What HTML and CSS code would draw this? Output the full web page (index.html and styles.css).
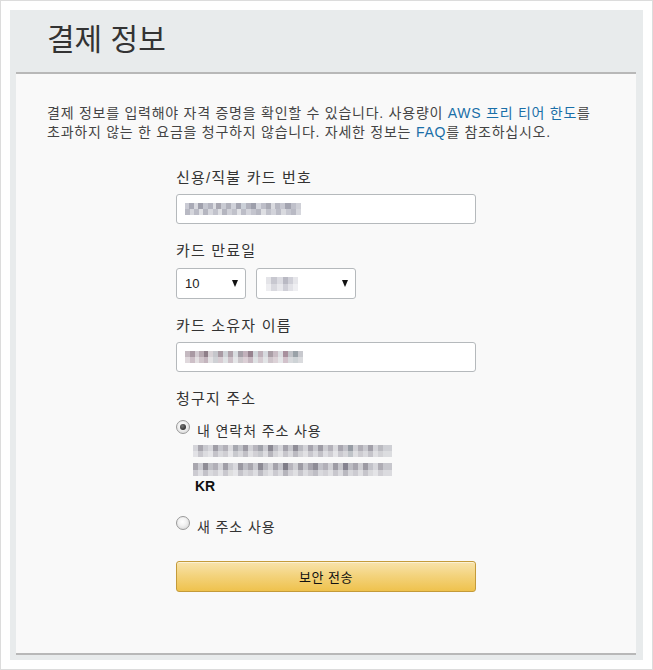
FILE: index.html
```html
<!DOCTYPE html>
<html lang="ko">
<head>
<meta charset="utf-8">
<title>결제 정보</title>
<link rel="stylesheet" href="styles.css">
</head>
<body>
<div class="page">
  <div class="panel">
    <div class="head">
      <h1 class="title">결제 정보</h1>
    </div>
    <div class="box">
      <p class="intro">결제 정보를 입력해야 자격 증명을 확인할 수 있습니다. 사용량이 <a class="link" href="#">AWS 프리 티어 한도</a>를<br>초과하지 않는 한 요금을 청구하지 않습니다. 자세한 정보는 <a class="link" href="#">FAQ</a>를 참조하십시오.</p>
      <div class="form">
        <div class="field">
          <div class="label">신용/직불 카드 번호</div>
          <div class="input"><span class="mosaic m-card"></span></div>
        </div>
        <div class="field">
          <div class="label">카드 만료일</div>
          <div class="selects">
            <div class="select s-month"><span class="sel-val">10</span><span class="arrow"></span></div>
            <div class="select s-year"><span class="mosaic m-year"></span><span class="arrow"></span></div>
          </div>
        </div>
        <div class="field">
          <div class="label">카드 소유자 이름</div>
          <div class="input"><span class="mosaic m-name"></span></div>
        </div>
        <div class="field">
          <div class="label">청구지 주소</div>
          <div class="radio-row first"><span class="radio checked"></span><span class="radio-text">내 연락처 주소 사용</span></div>
          <div class="address">
            <span class="mosaic m-addr1"></span>
            <span class="mosaic m-addr2"></span>
            <div class="country">KR</div>
          </div>
          <div class="radio-row second"><span class="radio"></span><span class="radio-text">새 주소 사용</span></div>
        </div>
        <button class="submit" type="button">보안 전송</button>
      </div>
    </div>
  </div>
</div>
</body>
</html>
```
FILE: styles.css
```css
html, body {
  margin: 0;
  padding: 0;
  background: #ffffff;
}
body {
  font-family: "Liberation Sans", "Noto Sans CJK KR", sans-serif;
  color: #444;
}
.page {
  box-sizing: border-box;
  width: 653px;
  height: 670px;
  border: 1px solid #dcdcdc;
  padding: 9px;
}
.panel {
  box-sizing: border-box;
  height: 650px;
  background: #e8ebec;
  padding: 0 7px 5px 6px;
  display: flex;
  flex-direction: column;
}
.head {
  height: 62px;
  flex: none;
}
.title {
  margin: 0;
  padding: 10px 0 0 31px;
  font-family: "Noto Sans CJK KR", sans-serif;
  font-weight: 400;
  font-size: 30px;
  line-height: 34px;
  color: #333;
}
.box {
  flex: 1;
  background: #f9f9f9;
  border-top: 2px solid #b8b8b8;
  border-bottom: 2px solid #b8b8b8;
  padding: 30px 0 0 31px;
}
.intro {
  margin: 0;
  font-size: 14px;
  line-height: 19px;
  letter-spacing: 0.75px;
  color: #444;
}
.link {
  color: #1a6fa8;
  text-decoration: none;
}
.form {
  margin: 26px 0 0 129px;
  width: 300px;
}
.field {
  margin-bottom: 17px;
}
.label {
  font-size: 15px;
  line-height: 20px;
  letter-spacing: 1.2px;
  color: #333;
  margin-bottom: 6px;
}
.input {
  box-sizing: border-box;
  height: 30px;
  background: #fff;
  border: 1px solid #b5b9bc;
  border-radius: 3px;
  padding: 8px 0 0 8px;
}
.selects {
  display: flex;
  gap: 10px;
  margin-top: 7px;
}
.select {
  box-sizing: border-box;
  height: 31px;
  background: #fff;
  border: 1px solid #b5b9bc;
  border-radius: 3px;
  display: flex;
  align-items: center;
  justify-content: space-between;
  padding: 0 7px 0 8px;
}
.s-month { width: 70px; }
.s-year { width: 100px; padding-left: 9px; }
.sel-val {
  font-size: 13px;
  color: #222;
}
.arrow {
  width: 0;
  height: 0;
  border-left: 3.5px solid transparent;
  border-right: 3.5px solid transparent;
  border-top: 7px solid #111;
}
.mosaic {
  display: block;
  height: 12px;
}
.m-card {
  width: 116px;
  background:
    linear-gradient(90deg, #c9cad3 0 4px, #a9aab6 4px 9px, #d8d9df 9px 13px, #9fa0ac 13px 18px, #c4c6cf 18px 23px, #b3b4bf 23px 28px, #dcdde2 28px 31px, #a7a6b0 31px 36px, #c9cbd3 36px 41px, #b0b1bb 41px 46px, #d0d2da 46px 51px, #a5a6b2 51px 56px, #cbd0d8 56px 61px, #b1b2bd 61px 66px, #9d9fab 66px 71px, #d4d6dd 71px 76px, #bdbec8 76px 81px, #a9aab4 81px 86px, #dadbe0 86px 90px, #b6b7c1 90px 95px, #c6c7d0 95px 100px, #a3a4b0 100px 106px, #bfc0ca 106px 111px, #cfd0d7 111px 116px) top / 100% 6px no-repeat,
    linear-gradient(90deg, #b8b9c3 0 5px, #d5d6dc 5px 9px, #bbbcc6 9px 14px, #e0e1e5 14px 18px, #b5b6c0 18px 23px, #d7d8de 23px 28px, #c2c3cc 28px 33px, #dfe0e4 33px 37px, #b4b5bf 37px 42px, #d0d1d8 42px 47px, #c0c1ca 47px 52px, #e1e2e6 52px 56px, #bcbdc7 56px 61px, #d4d5dc 61px 66px, #c4c5ce 66px 71px, #b7b8c2 71px 76px, #dedfe3 76px 81px, #c1c2cb 81px 86px, #d2d3da 86px 91px, #bbbcc6 91px 96px, #d9dadf 96px 101px, #c6c7d0 101px 106px, #b9bac4 106px 111px, #d6d7dd 111px 116px) bottom / 100% 6px no-repeat;
}
.m-name {
  width: 118px;
  background:
    linear-gradient(90deg, #c4b9c0 0 5px, #a999a3 5px 10px, #d3cbd1 10px 14px, #b7a9b1 14px 19px, #8f7f89 19px 23px, #d8d2d6 23px 28px, #c5c6cb 28px 33px, #a99ba4 33px 38px, #cfd3d7 38px 43px, #b0a3ab 43px 48px, #d9dde0 48px 53px, #a6a0a8 53px 58px, #c2b1bb 58px 63px, #97838f 63px 68px, #d1d6da 68px 73px, #bfb1ba 73px 78px, #d7dadf 78px 83px, #aa9ea6 83px 88px, #c9bcc4 88px 93px, #dcdde1 93px 98px, #a8909d 98px 103px, #c1c3c8 103px 108px, #9aa2a8 108px 113px, #c8c9ce 113px 118px) top / 100% 6px no-repeat,
    linear-gradient(90deg, #e0d9dd 0 5px, #cdbfc7 5px 10px, #e4e0e2 10px 14px, #d1c6cc 14px 19px, #c4b5be 19px 23px, #e3e2e4 23px 28px, #cfd1d5 28px 33px, #d7ccd2 33px 38px, #e0e3e5 38px 43px, #cec2c9 43px 48px, #e5e6e8 48px 53px, #cdc8cc 53px 58px, #dbcfd5 58px 63px, #c7b8c1 63px 68px, #dfe2e4 68px 73px, #d6ccd2 73px 78px, #e2e4e6 78px 83px, #cfc5cb 83px 88px, #dcd2d7 88px 93px, #e5e6e8 93px 98px, #d2c2cb 98px 103px, #d8dadd 103px 108px, #ced3d6 108px 113px, #dadbde 113px 118px) bottom / 100% 6px no-repeat;
}
.m-year {
  width: 32px;
  height: 14px;
  background:
    linear-gradient(90deg, #e4e4e8 0 5px, #c8c8d0 5px 11px, #dcdce2 11px 17px, #b9b9c3 17px 22px, #d0d0d8 22px 27px, #e6e6ea 27px 32px) top / 100% 7px no-repeat,
    linear-gradient(90deg, #eeeef1 0 5px, #d9d9df 5px 11px, #e8e8ec 11px 17px, #cfcfd7 17px 22px, #e2e2e7 22px 27px, #efeff2 27px 32px) bottom / 100% 7px no-repeat;
}
.radio-row {
  display: flex;
  align-items: center;
  height: 20px;
}
.radio-row.first {
  margin-top: 12px;
}
.radio-row.second {
  margin-top: 22px;
}
.radio {
  box-sizing: border-box;
  width: 14px;
  height: 14px;
  border-radius: 50%;
  border: 1px solid #9a9a9a;
  background: radial-gradient(circle at 45% 40%, #ffffff 0, #f2f2f2 40%, #cfcfcf 100%);
  margin: -8px 7px 0 0;
  display: flex;
  align-items: center;
  justify-content: center;
  flex: none;
}
.radio.checked::after {
  content: "";
  width: 6px;
  height: 6px;
  border-radius: 50%;
  background: radial-gradient(circle at 40% 35%, #777 0, #333 70%);
}
.radio-text {
  font-size: 14px;
  line-height: 20px;
  letter-spacing: 0.9px;
  color: #333;
}
.address {
  padding: 4px 0 0 17px;
}
.m-addr1 {
  width: 199px;
  height: 12px;
  margin-bottom: 6px;
  background:
    linear-gradient(90deg, #d5d5da 0 5px, #a8a6ae 5px 10px, #c9c9cf 10px 15px, #d7d7dc 15px 20px, #9f9da6 20px 25px, #c4c4cb 25px 30px, #b2b0b8 30px 35px, #dbdbdf 35px 40px, #a7a8b0 40px 45px, #c2c3c9 45px 50px, #9c9aa3 50px 55px, #d1d1d6 55px 60px, #b7b5bd 60px 65px, #a1a2aa 65px 70px, #ccccd2 70px 75px, #8b8993 75px 80px, #bebec5 80px 85px, #d6d6db 85px 90px, #a4a2ab 90px 95px, #c6c6cc 95px 100px, #8f8d97 100px 105px, #b9b9c0 105px 110px, #d3d3d8 110px 115px, #a6a4ad 115px 120px, #c8c8ce 120px 125px, #9e9ca5 125px 130px, #cdcdd2 130px 135px, #b4b2ba 135px 140px, #dadade 140px 145px, #a9a7b0 145px 150px, #c3c3ca 150px 155px, #979ca4 155px 160px, #d0d0d5 160px 165px, #b1afb7 165px 170px, #c9c9cf 170px 175px, #a2a0a9 175px 180px, #d4d4d9 180px 185px, #bbbbc1 185px 190px, #cfd0d5 190px 199px) top / 100% 6px no-repeat,
    linear-gradient(90deg, #e2e2e6 0 5px, #c9c8ce 5px 10px, #dcdce0 10px 15px, #e5e5e8 15px 20px, #c4c3c9 20px 25px, #d9d9dd 25px 30px, #cfced3 30px 35px, #e6e6e9 35px 40px, #c8c9ce 40px 45px, #d8d8dc 45px 50px, #c1c0c6 50px 55px, #e0e0e3 55px 60px, #d1d0d5 60px 65px, #c6c7cc 65px 70px, #dddde1 70px 75px, #b6b5bc 75px 80px, #d5d5d9 80px 85px, #e3e3e6 85px 90px, #c7c6cc 90px 95px, #dadade 95px 100px, #bbbac1 100px 105px, #d3d3d7 105px 110px, #e1e1e4 110px 115px, #c8c7cd 115px 120px, #dbdbdf 120px 125px, #c2c1c7 125px 130px, #dedee2 130px 135px, #cfced3 135px 140px, #e5e5e8 140px 145px, #cac9cf 145px 150px, #d7d7db 150px 155px, #bfc3c8 155px 160px, #dfdfe2 160px 165px, #cdccd1 165px 170px, #dadade 170px 175px, #c5c4ca 175px 180px, #e0e0e3 180px 185px, #d2d2d6 185px 190px, #dcdde0 190px 199px) bottom / 100% 6px no-repeat;
}
.m-addr2 {
  width: 199px;
  height: 13px;
  background:
    linear-gradient(90deg, #a9a7af 0 5px, #cbcbd1 5px 10px, #8f8d96 10px 15px, #c0c0c6 15px 20px, #b1afb7 20px 25px, #d4d4d9 25px 30px, #a09ea7 30px 35px, #c8c8ce 35px 40px, #d9d9de 40px 45px, #9a98a1 45px 50px, #bdbdc4 50px 55px, #a8a6ae 55px 60px, #cacad0 60px 65px, #8c8a94 65px 70px, #b9b9c0 70px 75px, #d2d2d7 75px 80px, #a4a2ab 80px 85px, #c3c3ca 85px 90px, #7f7d88 90px 95px, #b7b5bd 95px 100px, #cfcfd4 100px 105px, #9d9ba4 105px 110px, #c6c6cc 110px 115px, #a6a4ad 115px 120px, #8e8c96 120px 125px, #c1c1c8 125px 130px, #b2b0b8 130px 135px, #d0d0d5 135px 140px, #9e9ca5 140px 145px, #c5c5cb 145px 150px, #858390 150px 155px, #bcbcc3 155px 160px, #a7a5ae 160px 165px, #cdcdd2 165px 170px, #9c9aa3 170px 175px, #c2c2c9 175px 180px, #d6d6db 180px 185px, #aeacb4 185px 190px, #c7c7cd 190px 199px) top / 100% 7px no-repeat,
    linear-gradient(90deg, #cccbd1 0 5px, #dfdfe3 5px 10px, #c2c1c8 10px 15px, #dadade 15px 20px, #d1d0d5 20px 25px, #e3e3e6 25px 30px, #c9c8ce 30px 35px, #dededf 35px 40px, #e6e6e9 40px 45px, #c5c4ca 45px 50px, #d8d8dc 50px 55px, #cfced3 55px 60px, #dedee2 60px 65px, #bdbcc3 65px 70px, #d6d6da 70px 75px, #e2e2e5 75px 80px, #cbcad0 80px 85px, #dbdbdf 85px 90px, #b6b5bc 90px 95px, #d4d3d8 95px 100px, #e0e0e3 100px 105px, #c7c6cc 105px 110px, #dcdce0 110px 115px, #cdccd1 115px 120px, #bfbec5 120px 125px, #dadade 125px 130px, #d2d1d6 130px 135px, #e0e0e3 135px 140px, #c8c7cd 140px 145px, #dbdbdf 145px 150px, #bab9c0 150px 155px, #d8d8dc 155px 160px, #cccbd1 160px 165px, #dfdfe2 165px 170px, #c6c5cb 170px 175px, #dadadd 175px 180px, #e4e4e7 180px 185px, #d0cfd4 185px 190px, #dbdbdf 190px 199px) bottom / 100% 6px no-repeat;
}
.country {
  font-family: "Liberation Sans", sans-serif;
  font-weight: 700;
  font-size: 14px;
  line-height: 18px;
  color: #111;
  margin-top: 1px;
  padding-left: 2px;
}
.submit {
  display: block;
  box-sizing: border-box;
  width: 300px;
  height: 31px;
  margin-top: 24px;
  padding: 0;
  border: 1px solid #c49b3a;
  border-radius: 3px;
  background: linear-gradient(to bottom, #f8e3ab 0%, #f3d27a 50%, #efc24d 100%);
  font-family: "Liberation Sans", "Noto Sans CJK KR", sans-serif;
  font-size: 13px;
  letter-spacing: 0.5px;
  color: #111;
  box-shadow: inset 0 1px 0 rgba(255,255,255,0.5);
}
```
